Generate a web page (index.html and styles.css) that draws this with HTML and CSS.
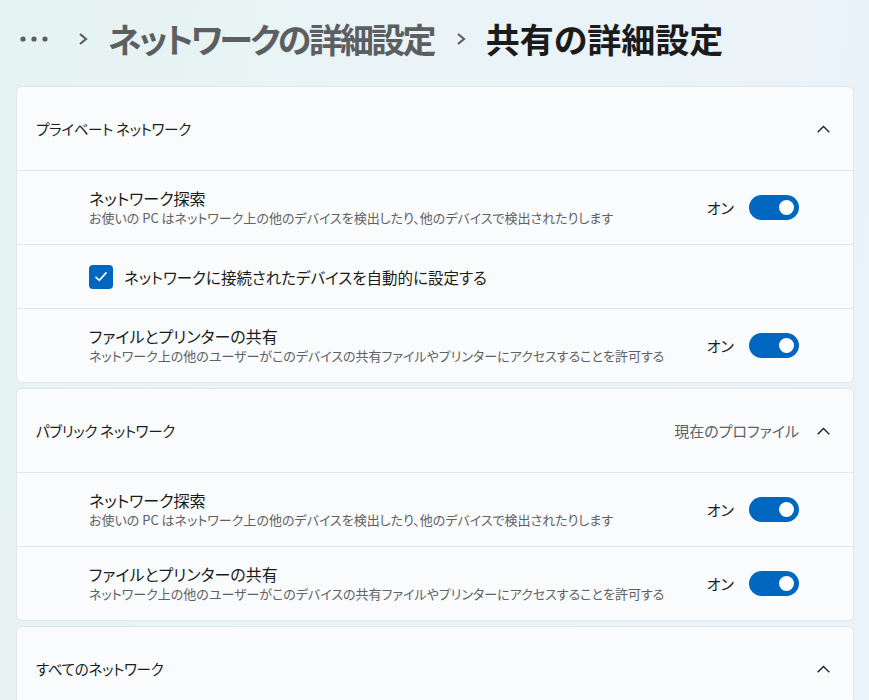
FILE: index.html
```html
<!DOCTYPE html>
<html lang="ja">
<head>
<meta charset="UTF-8" />
<meta name="viewport" content="width=device-width, initial-scale=1.0"/>
<title>共有の詳細設定</title>
<link rel="stylesheet" href="styles.css">
</head>
<body>

<div class="breadcrumb">
  <svg class="more" width="28" height="6" viewBox="0 0 28 6"><circle cx="3" cy="3" r="2.6"/><circle cx="14" cy="3" r="2.6"/><circle cx="25" cy="3" r="2.6"/></svg>
  <svg class="sep" width="10" height="12" viewBox="0 0 10 12"><path d="M2 1l6 5-6 5"/></svg>
  <span class="crumb">ネットワークの詳細設定</span>
  <svg class="sep" width="10" height="12" viewBox="0 0 10 12"><path d="M2 1l6 5-6 5"/></svg>
  <span class="crumb current">共有の詳細設定</span>
</div>

<div class="card">
  <div class="card-head">
    <span class="head-title">プライベート ネットワーク</span>
    <svg class="chevron" width="13" height="8" viewBox="0 0 13 8"><path d="M0.7 7.3L6.5 1.5l5.8 5.8"/></svg>
  </div>
  <div class="row">
    <div class="row-text">
      <div class="row-title">ネットワーク探索</div>
      <div class="row-desc">お使いの PC はネットワーク上の他のデバイスを検出したり、他のデバイスで検出されたりします</div>
    </div>
    <div class="switch-wrap"><span class="switch-label">オン</span><span class="switch"><span class="knob"></span></span></div>
  </div>
  <div class="row row-check">
    <span class="checkbox"><svg width="14" height="11" viewBox="0 0 14 11"><path d="M1.5 5.8l3.8 3.6 7.2-8"/></svg></span>
    <span class="check-label">ネットワークに接続されたデバイスを自動的に設定する</span>
  </div>
  <div class="row">
    <div class="row-text">
      <div class="row-title">ファイルとプリンターの共有</div>
      <div class="row-desc">ネットワーク上の他のユーザーがこのデバイスの共有ファイルやプリンターにアクセスすることを許可する</div>
    </div>
    <div class="switch-wrap"><span class="switch-label">オン</span><span class="switch"><span class="knob"></span></span></div>
  </div>
</div>

<div class="card">
  <div class="card-head">
    <span class="head-title">パブリック ネットワーク</span>
    <span class="head-note">現在のプロファイル</span>
    <svg class="chevron" width="13" height="8" viewBox="0 0 13 8"><path d="M0.7 7.3L6.5 1.5l5.8 5.8"/></svg>
  </div>
  <div class="row">
    <div class="row-text">
      <div class="row-title">ネットワーク探索</div>
      <div class="row-desc">お使いの PC はネットワーク上の他のデバイスを検出したり、他のデバイスで検出されたりします</div>
    </div>
    <div class="switch-wrap"><span class="switch-label">オン</span><span class="switch"><span class="knob"></span></span></div>
  </div>
  <div class="row">
    <div class="row-text">
      <div class="row-title">ファイルとプリンターの共有</div>
      <div class="row-desc">ネットワーク上の他のユーザーがこのデバイスの共有ファイルやプリンターにアクセスすることを許可する</div>
    </div>
    <div class="switch-wrap"><span class="switch-label">オン</span><span class="switch"><span class="knob"></span></span></div>
  </div>
</div>

<div class="card">
  <div class="card-head">
    <span class="head-title">すべてのネットワーク</span>
    <svg class="chevron" width="13" height="8" viewBox="0 0 13 8"><path d="M0.7 7.3L6.5 1.5l5.8 5.8"/></svg>
  </div>
</div>

</body>
</html>
```

FILE: styles.css
```css
* { box-sizing: border-box; }
body {
  margin: 0;
  padding: 0 15px 20px 16px;
  min-height: 100vh;
  background: linear-gradient(100deg, #e4f3f0 0%, #eaf4f6 35%, #eaf2fa 100%);
  color: #1b1b1b;
  font-family: "Noto Sans CJK JP", "Noto Sans", sans-serif;
  font-feature-settings: "palt";
}
.breadcrumb {
  display: flex;
  align-items: center;
  height: 78px;
  margin-bottom: 8px;
  padding-left: 4px;
}
.more { fill: #5c5f61; margin-right: 30px; }
.sep { fill: none; stroke: #5c5f61; stroke-width: 2.2; margin-right: 20px; }
.crumb {
  font-size: 34px;
  font-weight: 700;
  color: #5c5f61;
  margin-right: 22px;
  line-height: 1;
  letter-spacing: -2.7px;
}
.crumb.current { color: #1b1b1b; letter-spacing: 0; }
.card {
  background: #f9fbfc;
  border: 1px solid #e1e7ea;
  border-radius: 6px;
  margin-bottom: 5px;
}
.card-head {
  display: flex;
  align-items: center;
  height: 83px;
  padding: 0 23px 0 19px;
  font-size: 15px;
}
.head-title { flex: 1; font-size: 14.5px; letter-spacing: -0.3px; }
.head-note { color: #5f6163; margin-right: 18px; }
.chevron { fill: none; stroke: #1b1b1b; stroke-width: 1.3; }
.row {
  display: flex;
  align-items: center;
  height: 74px;
  border-top: 1px solid #e3e8eb;
  padding: 0 54px 0 72px;
}
.row-text { flex: 1; }
.row-title { font-size: 16px; line-height: 20px; }
.row-desc { font-size: 13px; line-height: 19px; color: #5f6163; }
.switch-wrap { display: flex; align-items: center; }
.switch-label { font-size: 15px; margin-right: 15px; }
.switch {
  display: flex;
  align-items: center;
  justify-content: flex-end;
  width: 50px;
  height: 25px;
  padding-right: 5px;
  border-radius: 13px;
  background: #0067c0;
}
.knob {
  width: 15px;
  height: 15px;
  border-radius: 50%;
  background: #fff;
}
.row-check { height: 64px; }
.checkbox {
  display: flex;
  align-items: center;
  justify-content: center;
  width: 24px;
  height: 24px;
  border-radius: 4px;
  background: #0067c0;
  margin-right: 11px;
}
.checkbox svg { fill: none; stroke: #fff; stroke-width: 1.6; }
.check-label { font-size: 15.5px; }
```
